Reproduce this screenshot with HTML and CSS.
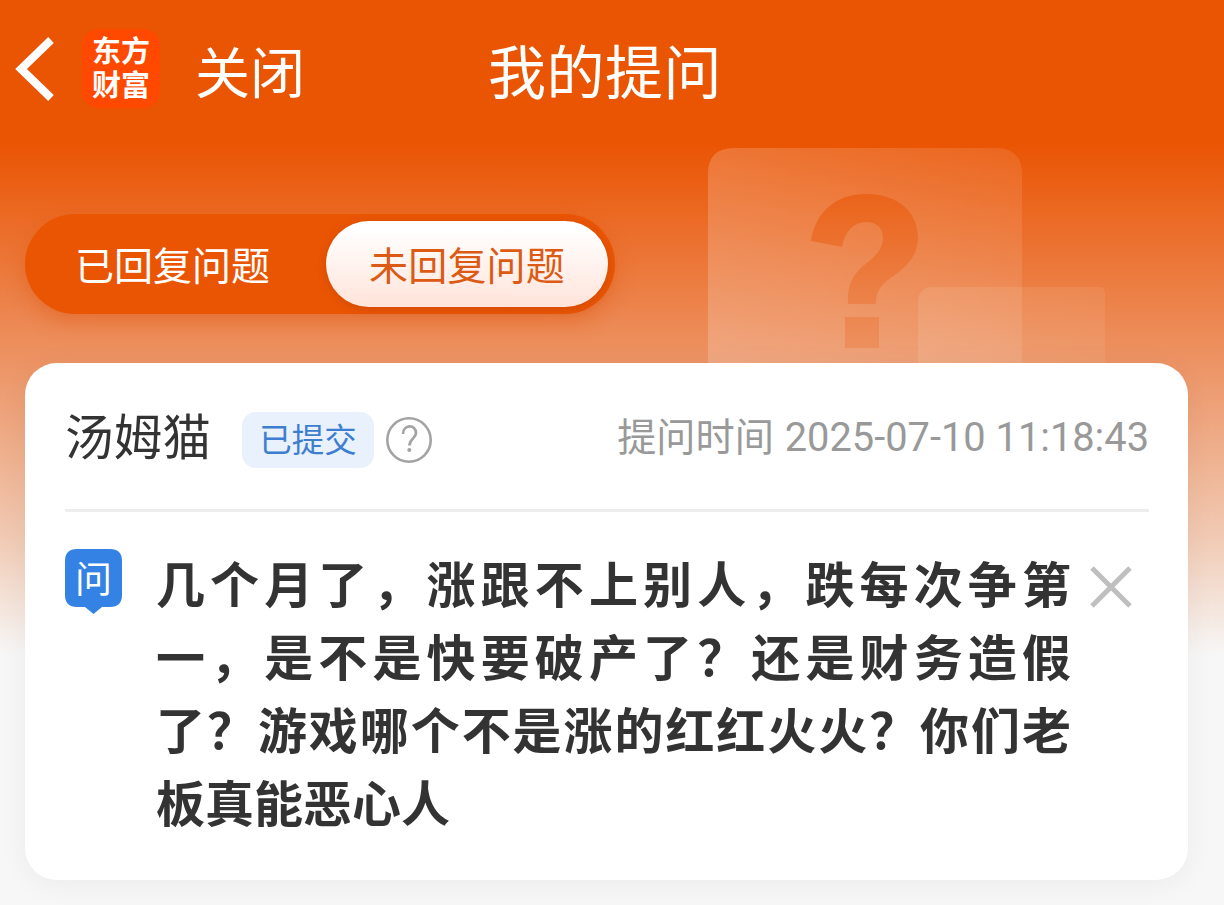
FILE: index.html
```html
<!DOCTYPE html>
<html lang="zh-CN">
<head>
<meta charset="utf-8">
<title>我的提问</title>
<link rel="stylesheet" href="styles.css">
</head>
<body>
<div class="page">
  <svg class="decor" width="400" height="215" viewBox="0 0 400 215">
    <defs>
      <linearGradient id="tile" x1="0" y1="0" x2="1" y2="0">
        <stop offset="0" stop-color="#fff" stop-opacity=".19"/>
        <stop offset="1" stop-color="#fff" stop-opacity=".1"/>
      </linearGradient>
      <linearGradient id="tile-small" x1="0" y1="0" x2="1" y2="0">
        <stop offset="0" stop-color="#f8f0e0" stop-opacity=".12"/>
        <stop offset="1" stop-color="#f8f0e0" stop-opacity=".08"/>
      </linearGradient>
      <mask id="cut">
        <rect width="400" height="215" fill="#fff"/>
        <path d="M103 93C107 66 126 46 158 46C190 46 210 64 210 90C210 107 199 119 184 129C172 137 168 144 168 156H140C139 134 147 124 160 114C170 106 175 99 175 90C175 80 169 74 158 74C146 74 137 83 134 99ZM137 169H171V200H137Z" fill="#000"/>
      </mask>
    </defs>
    <path d="M0 215V26Q0 0 26 0H288Q314 0 314 26V215Z" fill="url(#tile)" mask="url(#cut)"/>
    <path d="M210 215V155Q210 139 226 139H391Q397 139 397 145V215Z" fill="url(#tile-small)"/>
  </svg>
  <header class="nav">
    <svg class="back" width="40" height="66" viewBox="0 0 40 66"><path d="M36 4L6 33L36 62" fill="none" stroke="#fff" stroke-width="8"/></svg>
    <div class="logo"><span>东方</span><span>财富</span></div>
    <span class="close">关闭</span>
    <h1 class="title">我的提问</h1>
  </header>
  <nav class="tabs">
    <span class="tab">已回复问题</span>
    <span class="tab tab-active">未回复问题</span>
  </nav>
  <main class="card">
    <div class="card-head">
      <span class="company">汤姆猫</span>
      <span class="status">已提交</span>
      <svg class="help" width="46" height="46" viewBox="0 0 46 46"><g fill="none" stroke="#a3a3a3"><circle cx="23" cy="23" r="21.7" stroke-width="2.6"/><path d="M17 17C17 7 30 7 30 16C30 21 23.500 22 23.500 28.500" stroke-width="2.700"/></g><circle cx="23.300" cy="33" r="2" fill="#a3a3a3"/></svg>
      <span class="time">提问时间 <span class="digits">2025-07-10 11:18:43</span></span>
    </div>
    <div class="question">
      <div class="ask">
        <svg class="ask-shape" width="57" height="65" viewBox="0 0 57 65"><path d="M12 0H45Q57 0 57 12V46Q57 58 45 58H37L28.500 65L20 58H12Q0 58 0 46V12Q0 0 12 0Z" fill="#3482e4"/></svg>
        <span class="ask-text">问</span>
      </div>
      <p class="body">
        <span class="line">几个月了，涨跟不上别人，跌每次争第</span>
        <span class="line">一，是不是快要破产了？还是财务造假</span>
        <span class="line">了？游戏哪个不是涨的红红火火？你们老</span>
        <span class="line line-last">板真能恶心人</span>
      </p>
      <svg class="remove" width="42" height="42" viewBox="0 0 42 42"><path d="M2 2L40 40M40 2L2 40" stroke="#bfbfbf" stroke-width="5"/></svg>
    </div>
  </main>
</div>
</body>
</html>
```
FILE: styles.css
```css
* { box-sizing: border-box; }
body { margin: 0; font-family: "Noto Sans CJK SC", sans-serif; }
.page {
  position: relative;
  width: 1224px;
  height: 905px;
  overflow: hidden;
  padding: 0 36px 0 25px;
  background: linear-gradient(#ea5504 0, #ea5504 145px, #ed9668 370px, #f1cbb5 540px, #f7f7f7 655px);
}
.decor { position: absolute; left: 708px; top: 148px; }
.nav {
  display: flex;
  align-items: center;
  height: 138px;
  margin-left: -10px;
  color: #fff;
  white-space: nowrap;
}
.back { flex: none; }
.logo {
  display: flex;
  flex-direction: column;
  align-items: center;
  width: 78px;
  height: 79px;
  margin: 0 0 1px 27px;
  padding-top: 3px;
  border-radius: 17px;
  background: #ff4800;
  font-size: 29px;
  font-weight: 700;
  line-height: 34px;
}
.close { margin-left: 35px; font-size: 55px; line-height: 80px; }
.title { margin: 0 0 0 183px; font-size: 58px; font-weight: 400; line-height: 80px; letter-spacing: .5px; }
.tabs {
  display: flex;
  width: 590px;
  height: 100px;
  margin-top: 76px;
  padding: 7px 7px 7px 0;
  border-radius: 50px;
  background: #ea5504;
  box-shadow: 0 8px 20px rgba(220, 80, 10, .4);
}
.tab {
  width: 301px;
  padding-left: 50px;
  color: #fff;
  font-size: 39px;
  line-height: 85px;
  white-space: nowrap;
}
.tab-active {
  width: 282px;
  padding-left: 43px;
  border-radius: 43px;
  background: linear-gradient(#fff 10%, #ffe4da);
  box-shadow: 0 2px 10px rgba(150, 50, 0, .3);
  color: #dc5a14;
  letter-spacing: .2px;
}
.card {
  position: relative;
  width: 1163px;
  height: 517px;
  margin-top: 49px;
  padding: 0 39px 0 40px;
  border-radius: 32px;
  background: #fff;
  box-shadow: 0 4px 30px rgba(0, 0, 0, .05);
}
.card-head {
  display: flex;
  align-items: center;
  height: 149px;
  border-bottom: 3px solid #ededed;
  white-space: nowrap;
}
.company { width: 146px; color: #333; font-size: 48.5px; line-height: 60px; margin-bottom: 5px; letter-spacing: .3px; }
.status {
  width: 132px;
  height: 56px;
  margin: 7px 0 0 31px;
  border-radius: 14px;
  background: #e8f1fc;
  color: #3d7ed0;
  font-size: 32.500px;
  line-height: 51px;
  text-align: center;
}
.help { margin: 7px 0 0 12px; }
.time { margin-left: auto; color: #999; font-size: 39.2px; line-height: 60px; }
.digits { margin-left: 2px; font-family: Roboto, sans-serif; font-size: 39.800px; }
.question { display: flex; align-items: flex-start; padding-top: 37px; }
.ask { position: relative; width: 57px; height: 65px; }
.ask-shape { display: block; }
.ask-text {
  position: absolute;
  left: 0;
  top: 0;
  width: 57px;
  color: #fff;
  font-size: 37px;
  line-height: 56px;
  text-align: center;
}
.body {
  width: 915px;
  margin: -4px 0 0 34px;
  color: #333;
  font-size: 49px;
  font-weight: 700;
  line-height: 73px;
}
.line { display: block; text-align: justify; text-align-last: justify; white-space: nowrap; }
.line-last { text-align-last: left; }
.remove { margin: 17px 0 0 19px; }
```
